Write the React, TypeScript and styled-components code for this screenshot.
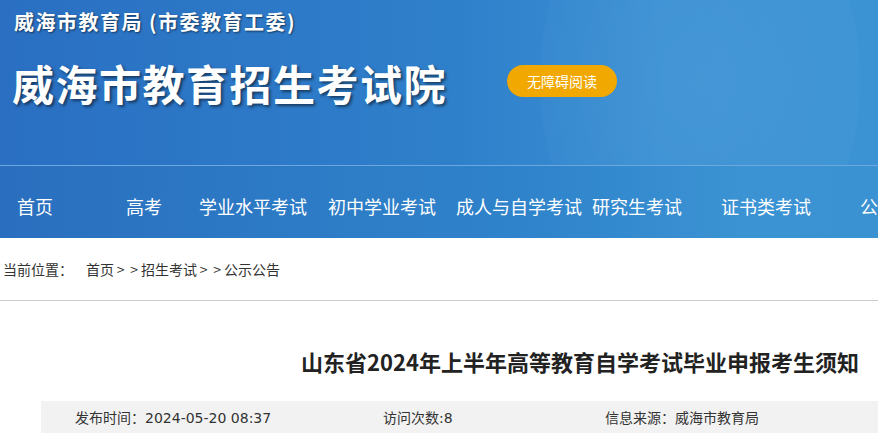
import styled, { createGlobalStyle } from "styled-components"
import { FC } from "react"

const GlobalStyle = createGlobalStyle`
  html, body {
    margin: 0;
    padding: 0;
    background: #fff;
    overflow: hidden;
  }
  body {
    font-family: "Noto Sans CJK SC", "Noto Sans", sans-serif;
    color: #333;
  }
`

interface NavItem {
  name: string
  width: number
}

const navs: NavItem[] = [
  { name: "首页", width: 109 },
  { name: "高考", width: 73 },
  { name: "学业水平考试", width: 129 },
  { name: "初中学业考试", width: 128 },
  { name: "成人与自学考试", width: 136 },
  { name: "研究生考试", width: 129 },
  { name: "证书类考试", width: 139 },
  { name: "公示公告", width: 130 },
  { name: "政策法规", width: 130 },
]

const crumbs = ["首页", "招生考试", "公示公告"]

const Header = () => {
  return <HeaderContainer>
    <div className="glow" />
    <SubTitle>威海市教育局 (市委教育工委)</SubTitle>
    <TitleRow>
      <SiteTitle>威海市教育招生考试院</SiteTitle>
      <ReadButton>无障碍阅读</ReadButton>
    </TitleRow>
  </HeaderContainer>
}

const Nav = () => {
  return <NavContainer>
    {navs.map(item => <NavLink key={item.name} $width={item.width}>{item.name}</NavLink>)}
  </NavContainer>
}

const Crumb = () => {
  return <CrumbContainer>
    <span className="label">当前位置：</span>
    {crumbs.map((name, i) => <span key={name}>
      {i > 0 && <><Arrow>&gt;</Arrow><Arrow>&gt;</Arrow></>}
      {name}
    </span>)}
  </CrumbContainer>
}

const Article: FC = () => {
  return <ArticleContainer>
    <ArticleTitle>山东省2024年上半年高等教育自学考试毕业申报考生须知</ArticleTitle>
    <InfoBar>
      <InfoItem $width={308}>发布时间：2024-05-20 08:37</InfoItem>
      <InfoItem $width={222}>访问次数:8</InfoItem>
      <InfoItem>信息来源：威海市教育局</InfoItem>
    </InfoBar>
  </ArticleContainer>
}

const App = () => {
  return <Page>
    <GlobalStyle />
    <Header />
    <Nav />
    <Crumb />
    <Article />
  </Page>
}

export default App

const Page = styled.div`
  width: 1200px;
`

const HeaderContainer = styled.div`
  position: relative;
  height: 166px;
  box-sizing: border-box;
  padding: 8px 0 0 14px;
  overflow: hidden;
  background: linear-gradient(90deg, #2a6fc2 0%, #2f80cb 38%, #3a90d3 55%, #3c93d4 72%, #2f87cc 82%, #2c80c8 100%);
  border-bottom: 1px solid #6ba8df;
  .glow {
    position: absolute;
    left: 540px;
    top: -140px;
    width: 320px;
    height: 440px;
    border-radius: 50%;
    background: radial-gradient(ellipse at center, rgba(255, 255, 255, 0.05) 0%, rgba(255, 255, 255, 0.02) 70%, rgba(255, 255, 255, 0) 100%);
  }
`

const SubTitle = styled.div`
  position: relative;
  font-size: 20px;
  line-height: 28px;
  font-weight: bold;
  color: #fff;
  text-shadow: 1px 1px 2px rgba(0, 0, 0, 0.55);
  letter-spacing: 1.5px;
`

const TitleRow = styled.div`
  position: relative;
  display: flex;
  align-items: center;
  margin-top: 19px;
`

const SiteTitle = styled.div`
  font-size: 42px;
  line-height: 56px;
  font-weight: bold;
  color: #fff;
  letter-spacing: 1.5px;
  text-shadow: 2px 2px 3px rgba(0, 0, 0, 0.5);
  margin-left: -2px;
`

const ReadButton = styled.div`
  margin-left: 60px;
  margin-top: -4px;
  width: 110px;
  height: 32px;
  border-radius: 16px;
  background: #f1a800;
  color: #fff;
  font-size: 14px;
  line-height: 32px;
  text-align: center;
`

const NavContainer = styled.div`
  display: flex;
  align-items: center;
  height: 72px;
  box-sizing: border-box;
  padding: 7px 0 0 17px;
  background: linear-gradient(90deg, #2a6fbf 0%, #2f84cb 45%, #3c93d3 62%, #3b92d2 76%, #2f87cc 86%, #2c83ca 100%);
`

const NavLink = styled.div<{ $width: number }>`
  flex: none;
  width: ${p => p.$width}px;
  font-size: 18px;
  line-height: 24px;
  color: #fff;
  white-space: nowrap;
`

const CrumbContainer = styled.div`
  height: 62px;
  line-height: 62px;
  padding-left: 3px;
  font-size: 14px;
  color: #333;
  border-bottom: 1px solid #ccc;
  width: 875px;
  .label {
    margin-right: 13px;
  }
`

const Arrow = styled.span`
  display: inline-block;
  width: 13.5px;
  text-align: center;
`

const ArticleContainer = styled.div`
  margin-left: 41px;
  width: 1078px;
`

const ArticleTitle = styled.h1`
  margin: 45px 0 25px;
  font-size: 22px;
  line-height: 30px;
  font-weight: bold;
  color: #222;
  text-align: center;
`

const InfoBar = styled.div`
  display: flex;
  align-items: center;
  height: 32px;
  padding-left: 34px;
  background: #f2f2f2;
  font-family: "DejaVu Sans", "Noto Sans CJK SC", sans-serif;
  font-size: 14px;
  color: #333;
`

const InfoItem = styled.div<{ $width?: number }>`
  flex: none;
  ${p => p.$width ? `width: ${p.$width}px;` : ""}
`
